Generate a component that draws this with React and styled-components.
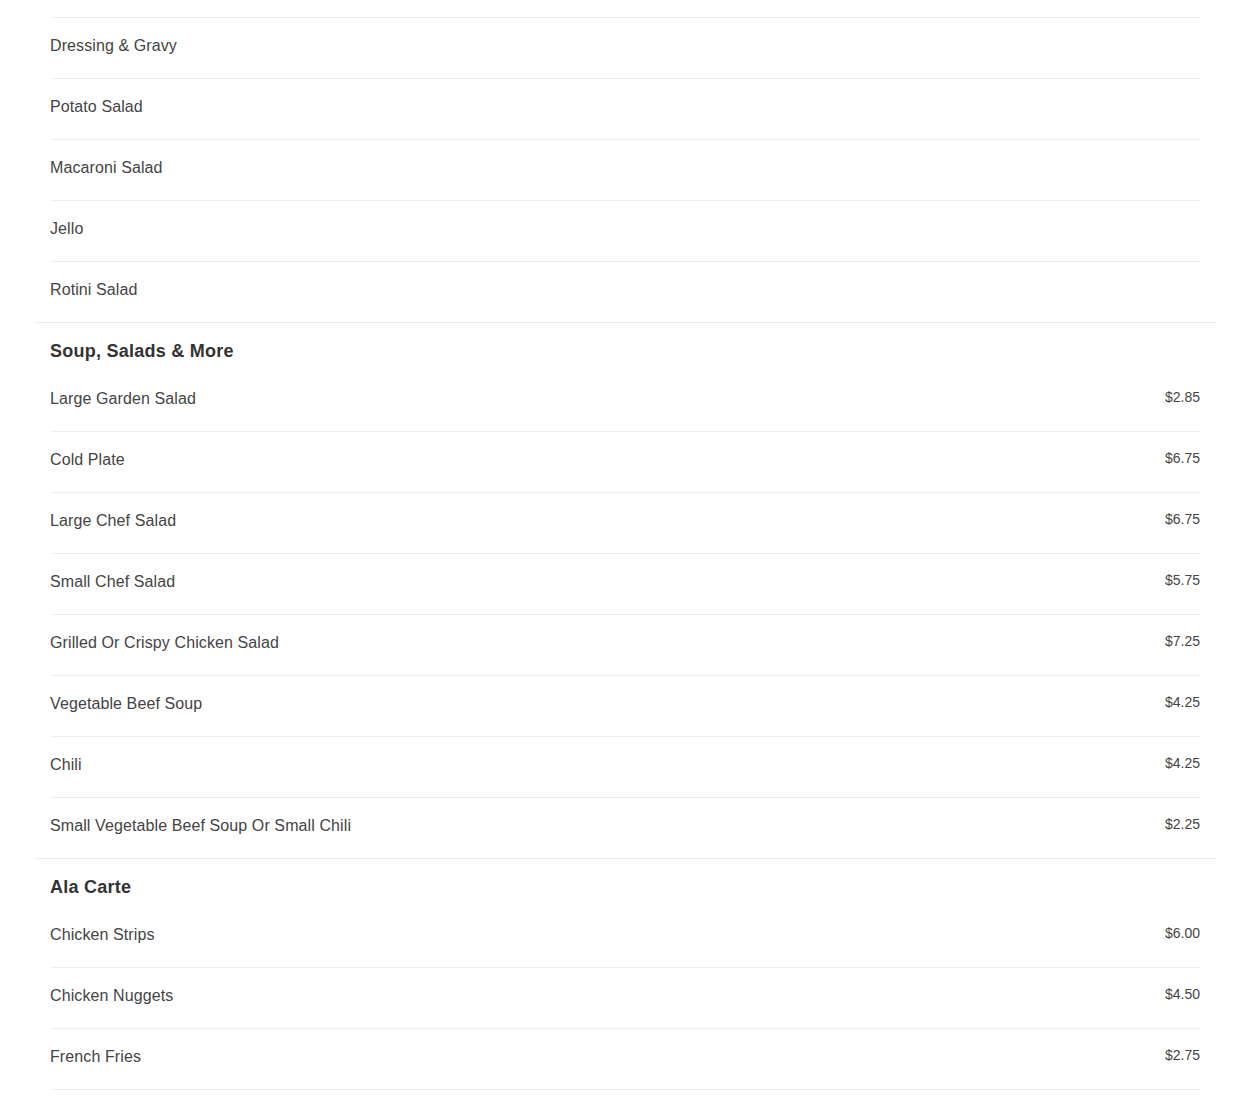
import styled, { createGlobalStyle } from "styled-components";

const GlobalStyle = createGlobalStyle`
    body {
        margin: 0;
        background: #fff;
        font-family: "Liberation Sans", Arial, sans-serif;
        color: #444;
    }
`;

// the first list is scrolled in from above, the last one runs on below the fold
const menu = [
    {
        title: null,
        items: [
            { name: "Dressing & Gravy" },
            { name: "Potato Salad" },
            { name: "Macaroni Salad" },
            { name: "Jello" },
            { name: "Rotini Salad" },
        ],
    },
    {
        title: "Soup, Salads & More",
        items: [
            { name: "Large Garden Salad", price: "$2.85" },
            { name: "Cold Plate", price: "$6.75" },
            { name: "Large Chef Salad", price: "$6.75" },
            { name: "Small Chef Salad", price: "$5.75" },
            { name: "Grilled Or Crispy Chicken Salad", price: "$7.25" },
            { name: "Vegetable Beef Soup", price: "$4.25" },
            { name: "Chili", price: "$4.25" },
            { name: "Small Vegetable Beef Soup Or Small Chili", price: "$2.25" },
        ],
    },
    {
        title: "Ala Carte",
        more: true,
        items: [
            { name: "Chicken Strips", price: "$6.00" },
            { name: "Chicken Nuggets", price: "$4.50" },
            { name: "French Fries", price: "$2.75" },
        ],
    },
];

const Page = styled.div`
    margin: 0 34px;
    padding-top: 17px;
`;

const Section = styled.section`
    padding: 0 16px;
    border-bottom: ${(p) => (p.$more ? "none" : "1px solid #eee")};
`;

const SectionTitle = styled.h3`
    margin: 0;
    padding: 17px 0 9px;
    font-size: 18px;
    line-height: 22px;
    letter-spacing: 0.25px;
    font-weight: bold;
    color: #333;
`;

const ItemList = styled.ul`
    list-style: none;
    margin: 0;
    padding: 0;
    border-top: ${(p) => (p.$continued ? "1px solid #eee" : "none")};
`;

const Item = styled.li`
    display: flex;
    justify-content: space-between;
    align-items: flex-start;
    padding: 18px 0 22px;
    border-bottom: 1px solid #eee;
    ${ItemList}:not([data-more]) > &:last-child {
        border-bottom: 0;
    }
`;

const ItemName = styled.span`
    font-size: 16px;
    line-height: 20px;
    letter-spacing: 0.1px;
    color: #444;
`;

const ItemPrice = styled.span`
    font-size: 14px;
    line-height: 17px;
    color: #444;
`;

const App = () => {
    return (
        <>
            <GlobalStyle />
            <Page>
                {menu.map((section, i) => (
                    <Section key={`section_${i}`} $more={section.more}>
                        {section.title && <SectionTitle>{section.title}</SectionTitle>}
                        <ItemList $continued={!section.title} data-more={section.more || undefined}>
                            {section.items.map((item) => (
                                <Item key={item.name}>
                                    <ItemName>{item.name}</ItemName>
                                    {item.price && <ItemPrice>{item.price}</ItemPrice>}
                                </Item>
                            ))}
                        </ItemList>
                    </Section>
                ))}
            </Page>
        </>
    );
};

export default App;
